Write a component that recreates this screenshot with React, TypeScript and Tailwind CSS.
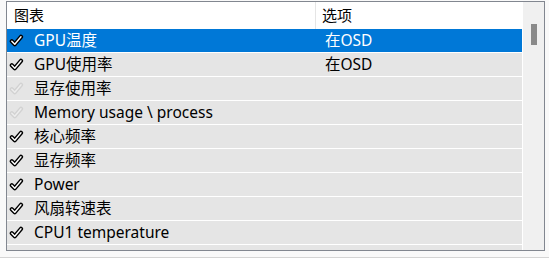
import React from "react";

type Row = { name: string; option?: string; state: "on" | "off"; selected?: boolean };

const rows: Row[] = [
  { name: "GPU温度", option: "在OSD", state: "on", selected: true },
  { name: "GPU使用率", option: "在OSD", state: "on" },
  { name: "显存使用率", state: "off" },
  { name: "Memory usage \\ process", state: "off" },
  { name: "核心频率", state: "on" },
  { name: "显存频率", state: "on" },
  { name: "Power", state: "on" },
  { name: "风扇转速表", state: "on" },
  { name: "CPU1 temperature", state: "on" },
  { name: "", state: "off" },
];

function Check({ off }: { off?: boolean }) {
  const d = "M2.8 7.2 L5.8 10.2 L12 2.8";
  return (
    <svg width="15" height="13" viewBox="0 0 15 13" className="shrink-0 -mt-[2px]">
      <path d={d} fill="none" stroke={off ? "#d2d2d2" : "#000"} strokeWidth="4.2" strokeLinecap="round" strokeLinejoin="round" />
      <path d={d} fill="none" stroke={off ? "#ededed" : "#fff"} strokeWidth="1.4" strokeLinecap="round" strokeLinejoin="round" />
    </svg>
  );
}

export default function App() {
  return (
    <div
      className="w-[549px] h-[258px] bg-[#f9f9f9] pt-[1px] pl-[6px] border-b border-[#d4d4d4] overflow-hidden"
      style={{ fontFamily: '"Noto Sans", "Noto Sans CJK SC", sans-serif' }}
    >
      <div className="w-[539px] h-[250px] border border-[#828790] bg-white flex">
        <div className="w-[515px] flex flex-col overflow-hidden">
          {/* header */}
          <div className="h-[27px] shrink-0 flex text-[15px] text-black bg-white">
            <div className="w-[309px] border-r border-[#e5e5e5] pl-[7px] flex items-center">图表</div>
            <div className="flex-1 pl-[6px] flex items-center">选项</div>
          </div>
          {rows.map((r, i) => (
            <div
              key={i}
              className={
                "h-[23px] shrink-0 mb-[1px] pt-[1px] flex items-center text-[15.5px] " +
                (r.selected ? "bg-[#0078d7] text-white" : "bg-[#e5e5e5] text-black")
              }
            >
              <div className="w-[309px] flex items-center pl-[2px] gap-[10px]">
                <Check off={r.state === "off"} />
                <span>{r.name}</span>
              </div>
              <div className="flex-1 pl-[9px]">{r.option}</div>
            </div>
          ))}
        </div>
        <div className="w-[1px] bg-white" />
        <div className="w-[21px] bg-[#f0f0f0] flex justify-center pt-[22px]">
          <div className="w-[6px] h-[21px] bg-[#8a8a8a]" />
        </div>
      </div>
    </div>
  );
}
